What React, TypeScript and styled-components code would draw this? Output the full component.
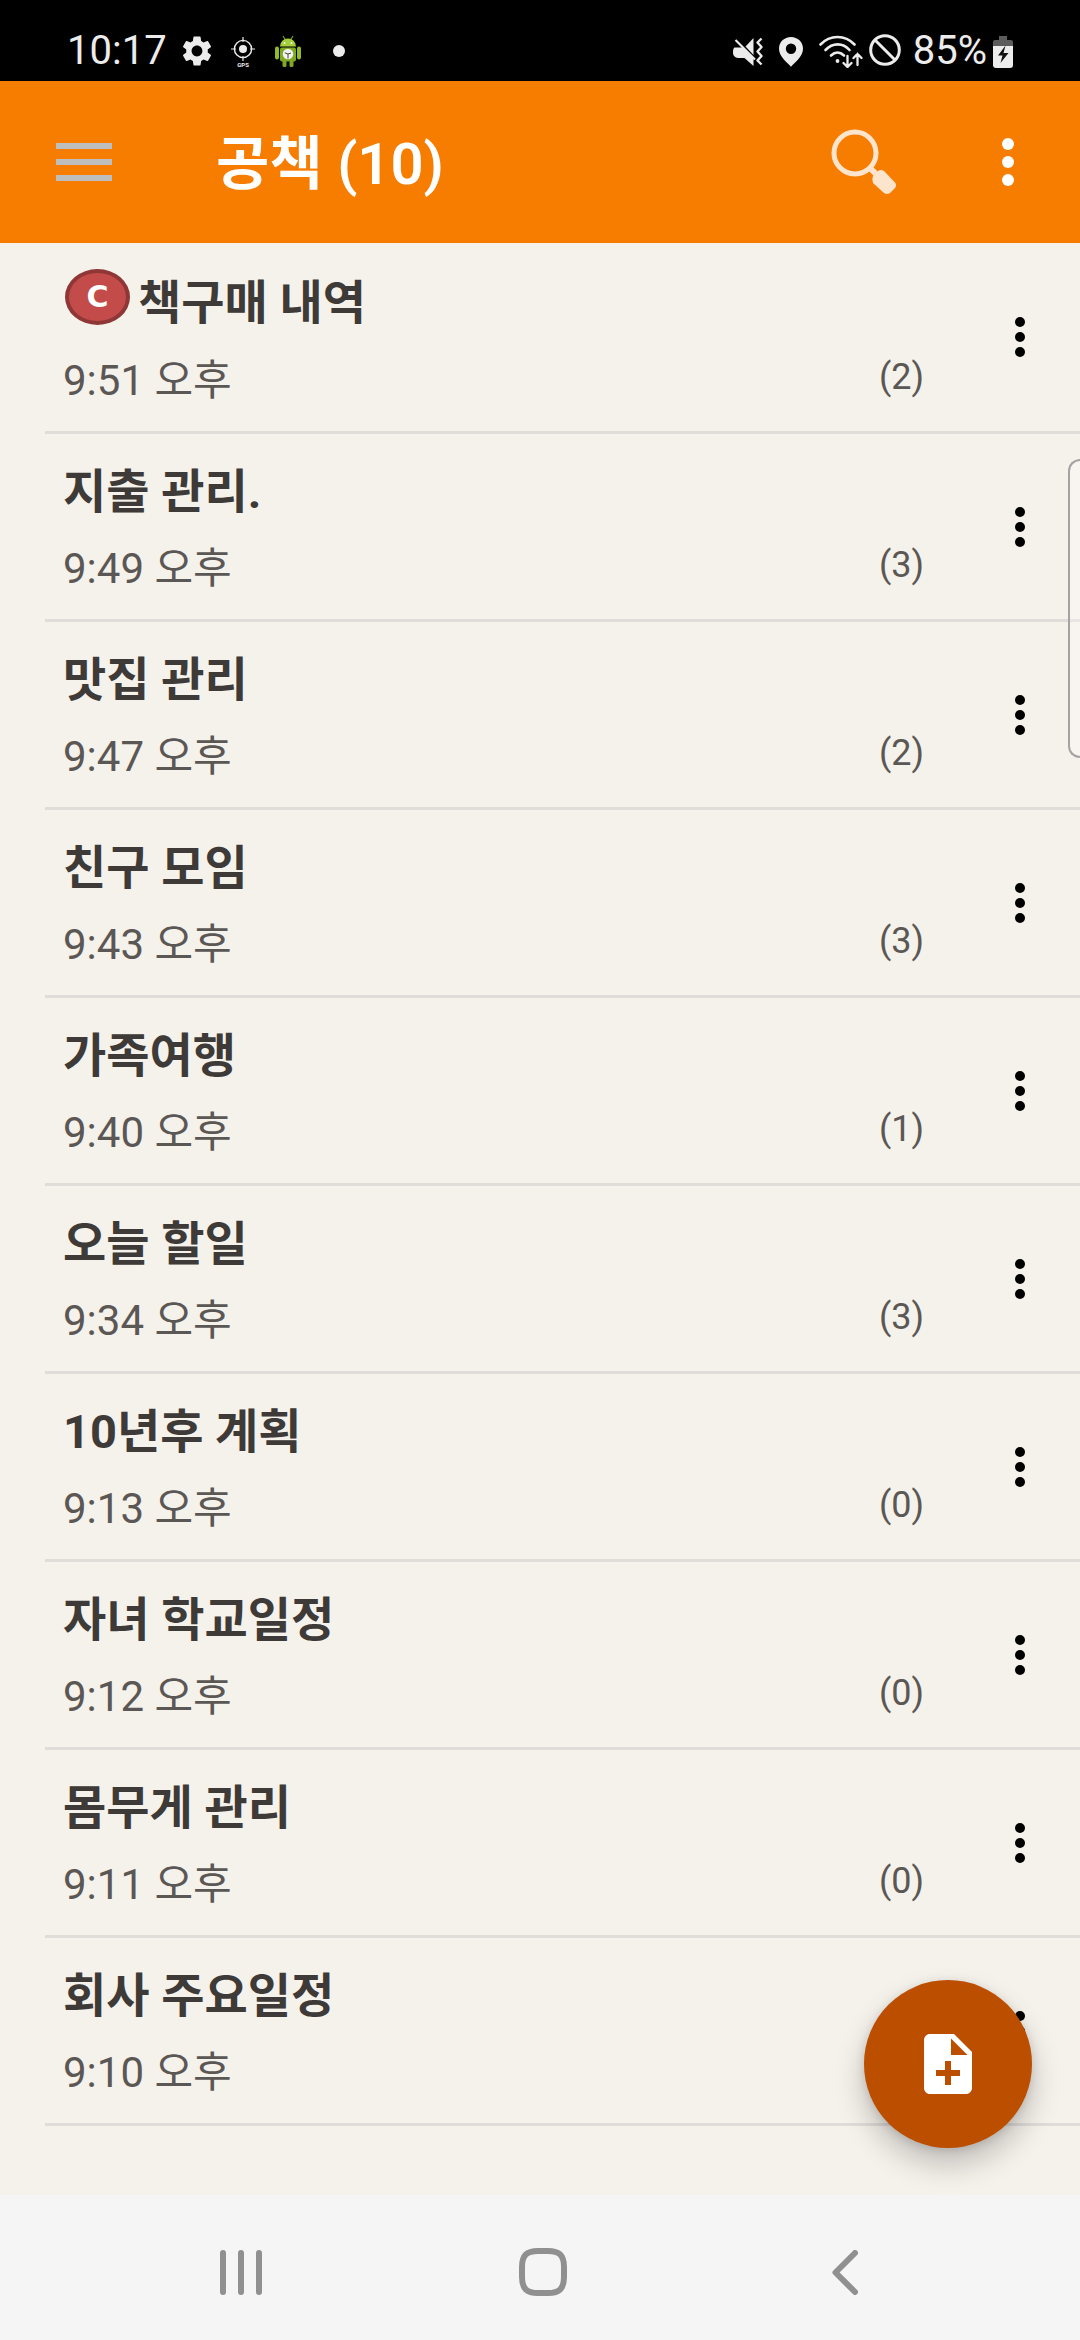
import React from "react";
import styled, { createGlobalStyle } from "styled-components";
import { MdNoteAdd, MdSettings } from "react-icons/md";

const GlobalStyle = createGlobalStyle`
  *, *::before, *::after { box-sizing: border-box; }
  body {
    margin: 0;
    background: #f5f1eb;
    font-family: Roboto, "Noto Sans CJK KR", sans-serif;
  }
  button {
    border: 0;
    padding: 0;
    background: none;
    font: inherit;
    cursor: pointer;
  }
  svg { display: block; flex: none; }
`;

const Screen = styled.div`
  position: relative;
  display: flex;
  flex-direction: column;
  min-height: 100vh;
`;

const StatusBar = styled.div`
  display: flex;
  justify-content: space-between;
  height: 81px;
  padding: 21px 67px 0 67px;
  background: #000;
  color: #ececec;
`;

const StatusGroup = styled.div<{ $gap: number }>`
  display: flex;
  align-items: center;
  gap: ${(p) => p.$gap}px;
  height: 60px;
`;

const StatusText = styled.span`
  font-size: 40px;
  line-height: 48px;
`;

const StatusDot = styled.span`
  width: 12px;
  height: 12px;
  margin-left: 12px;
  border-radius: 50%;
  background: currentColor;
`;

const AppBar = styled.header`
  display: flex;
  align-items: center;
  height: 162px;
  background: #f77d00;
  color: #fff;
`;

const BarButton = styled.button<{ $width: number }>`
  display: flex;
  align-items: center;
  justify-content: center;
  width: ${(p) => p.$width}px;
  height: 144px;
  color: inherit;
`;

const AppTitle = styled.h1`
  flex: 1;
  margin: 0;
  padding: 4px 0 0 48px;
  font-size: 58px;
  font-weight: 600;
  line-height: 72px;
`;

const NoteList = styled.ul`
  flex: 1;
  margin: 0;
  padding: 0 0 0 45px;
  list-style: none;
`;

const NoteRow = styled.li`
  display: flex;
  border-bottom: 3px solid #dfdcd9;
`;

const NoteBody = styled.div`
  flex: 1;
  padding: 26px 36px 26px 18px;
`;

const NoteTitle = styled.h2`
  display: flex;
  align-items: center;
  gap: 8px;
  margin: 0;
  color: #3d3a37;
  font-size: 47px;
  font-weight: 700;
  line-height: 64px;
`;

const NoteMeta = styled.div`
  display: flex;
  justify-content: space-between;
  padding-top: 21px;
  color: #5b5754;
`;

const NoteTime = styled.time`
  font-size: 42px;
  line-height: 48px;
`;

const NoteCount = styled.span`
  font-size: 36px;
  line-height: 40px;
`;

const RowMenu = styled.button`
  display: flex;
  align-items: center;
  justify-content: center;
  width: 120px;
  color: #000;
`;

const BadgeBox = styled.span`
  display: flex;
  align-items: center;
  justify-content: center;
  width: 65px;
  height: 56px;
  margin: 0 0 11px 2px;
  border: 4px solid #8f3737;
  border-radius: 50%;
  background: #c34c4b;
  color: #fff;
  font-family: "DejaVu Sans", sans-serif;
  font-size: 30px;
  font-weight: 700;
  line-height: 40px;
`;

const EdgeHandle = styled.div`
  position: absolute;
  top: 459px;
  right: 0;
  width: 12px;
  height: 299px;
  border: 2px solid #a5a3a1;
  border-right: 0;
  border-radius: 12px 0 0 12px;
  background: rgba(255, 255, 255, 0.3);
`;

const AddButton = styled.button`
  position: absolute;
  right: 48px;
  bottom: 192px;
  display: flex;
  align-items: center;
  justify-content: center;
  width: 168px;
  height: 168px;
  border-radius: 50%;
  background: #bc4e00;
  color: #fff;
  box-shadow: 0 16px 30px rgba(0, 0, 0, 0.22), 0 2px 10px rgba(0, 0, 0, 0.12);
`;

const NavBar = styled.nav`
  display: flex;
  justify-content: space-between;
  height: 145px;
  padding: 0 134px 0 140px;
  background: #f5f5f5;
  color: #909090;
`;

const NavButton = styled.button`
  display: flex;
  align-items: center;
  justify-content: center;
  width: 202px;
  height: 100%;
  padding-top: 9px;
  color: inherit;
`;

function MoreDots({ radius, pitch }: { radius: number; pitch: number }) {
  const width = radius * 2;
  const height = width + pitch * 2;
  return (
    <svg width={width} height={height} viewBox={`0 0 ${width} ${height}`} fill="currentColor" aria-hidden="true">
      {[0, 1, 2].map((i) => (
        <circle key={i} cx={radius} cy={radius + pitch * i} r={radius} />
      ))}
    </svg>
  );
}

function GpsIcon() {
  return (
    <svg width="24" height="34" viewBox="0 0 24 34" fill="none" stroke="currentColor" aria-label="GPS">
      <circle cx="12" cy="15" r="8.6" strokeWidth="1.4" />
      <circle cx="12" cy="15" r="4" fill="currentColor" stroke="none" />
      <path d="M12 3v5M12 22v5M0 15h5M19 15h5" strokeWidth="1.2" />
      <text x="12" y="33" textAnchor="middle" fontFamily="Roboto, sans-serif" fontSize="6" fontWeight="700" fill="currentColor" stroke="none">
        GPS
      </text>
    </svg>
  );
}

function RobotIcon() {
  return (
    <svg width="26" height="34" viewBox="0 0 26 34" aria-hidden="true">
      <path d="M8 2l2.500 4M18 2l-2.500 4" stroke="#7d9f1e" strokeWidth="1.200" />
      <path d="M5 12.500a8 8 0 0 1 16 0z" fill="#a5cf3a" />
      <rect x="5" y="13.500" width="16" height="14" rx="2" fill="#7fa823" />
      <rect x="0" y="12.500" width="4" height="13" rx="2" fill="#8fbb2c" />
      <rect x="22" y="12.500" width="4" height="13" rx="2" fill="#8fbb2c" />
      <rect x="7.500" y="26" width="4" height="7" rx="1.500" fill="#7fa823" />
      <rect x="14.500" y="26" width="4" height="7" rx="1.500" fill="#7fa823" />
      <circle cx="9.500" cy="9" r="0.900" fill="#fff" />
      <circle cx="16.500" cy="9" r="0.900" fill="#fff" />
      <circle cx="13" cy="20" r="5.300" fill="#f2f2ee" />
      <path d="M9.800 18.800l3.200 1.200 3-1M13 20v4.500" fill="none" stroke="#444" strokeWidth="1" />
    </svg>
  );
}

function MuteIcon() {
  return (
    <svg width="30" height="34" viewBox="0 0 30 34" fill="none" stroke="currentColor" aria-hidden="true">
      <path d="M20.500 4v17L12.500 12.500z" fill="currentColor" stroke="none" />
      <path d="M2 13.500h7.500L20.500 24.500v7.500L11.500 24H7C2 24 0 22 0 18.500c0-3 .500-5 2-5z" fill="currentColor" stroke="none" />
      <path d="M2.500 6L22 25.500" strokeWidth="2.200" />
      <path d="M28.500 4.500l-4 4 4 4.500-4 4.500 4 4.500-4 4.500 4 4" strokeWidth="2.400" strokeLinejoin="round" />
    </svg>
  );
}

function PinIcon() {
  return (
    <svg width="24" height="34" viewBox="0 0 24 34" fill="currentColor" aria-hidden="true">
      <path fillRule="evenodd" d="M12 3C5.300 3 0 8 0 14.800 0 22 6.500 27 12 32.700 17.500 27 24 22 24 14.800 24 8 18.700 3 12 3zm0 6.600a5.200 5.200 0 1 1 0 10.400 5.200 5.200 0 0 1 0-10.400z" />
    </svg>
  );
}

function WifiIcon() {
  return (
    <svg width="44" height="34" viewBox="0 0 44 34" fill="none" stroke="currentColor" strokeWidth="2.600" strokeLinecap="round" aria-hidden="true">
      <path d="M1.500 10.500C11 .500 26 .500 35.500 10.500" />
      <path d="M6.500 16c7-7.500 17.500-7.500 24 0" />
      <path d="M12 21.500c4-4 9-4 13 0" />
      <circle cx="18.500" cy="27" r="1.900" fill="currentColor" stroke="none" />
      <path d="M28.500 22v11M24.500 29l4 4 4-4M38.500 31V20M34.500 24l4-4 4 4" strokeWidth="2.300" />
    </svg>
  );
}

function BlockIcon() {
  return (
    <svg width="32" height="34" viewBox="0 0 32 34" fill="none" stroke="currentColor" strokeWidth="3" aria-hidden="true">
      <circle cx="16" cy="16" r="14.300" />
      <path d="M6 6l20 20" />
    </svg>
  );
}

function BatteryIcon() {
  return (
    <svg width="20" height="34" viewBox="0 0 20 34" aria-hidden="true">
      <path d="M6 2h8v4h4a2 2 0 0 1 2 2v5H0V8a2 2 0 0 1 2-2h4z" fill="#5c5c5c" />
      <path d="M0 12h20v19a3 3 0 0 1-3 3H3a3 3 0 0 1-3-3z" fill="currentColor" />
      <path d="M12.500 11.500L5 21.500h4.500L7.500 29 15.500 19h-5z" fill="#111" />
    </svg>
  );
}

function MenuIcon() {
  return (
    <svg width="56" height="38" viewBox="0 0 56 38" fill="#bebebe" aria-hidden="true">
      <path d="M0 0h56v6H0zM0 16h56v6H0zM0 32h56v6H0z" />
    </svg>
  );
}

function SearchIcon() {
  return (
    <svg width="68" height="68" viewBox="0 0 68 68" fill="none" stroke="#fde5cd" aria-hidden="true">
      <circle cx="25" cy="25" r="21" strokeWidth="5" />
      <path d="M39 39l8 8" strokeWidth="6" />
      <path d="M43 48l5-5q3-2 6 0l11 11.500q2 3 0 5.500l-5 5q-3 2-6 0L43 55q-1.500-4 0-7z" fill="#fde5cd" stroke="none" />
    </svg>
  );
}

function RecentsIcon() {
  return (
    <svg width="42" height="45" viewBox="0 0 42 45" stroke="currentColor" strokeWidth="6" strokeLinecap="round" aria-hidden="true">
      <path d="M3 3v39M21 3v39M39 3v39" />
    </svg>
  );
}

function HomeIcon() {
  return (
    <svg width="48" height="48" viewBox="0 0 48 48" fill="none" stroke="currentColor" strokeWidth="6" aria-hidden="true">
      <path d="M19 3h10c11.500 0 16 4.500 16 16v10c0 11.500-4.500 16-16 16H19C7.500 45 3 40.500 3 29V19C3 7.500 7.500 3 19 3z" />
    </svg>
  );
}

function BackIcon() {
  return (
    <svg width="26" height="45" viewBox="0 0 26 45" fill="none" stroke="currentColor" strokeWidth="6" strokeLinecap="round" strokeLinejoin="round" aria-hidden="true">
      <path d="M23 3L3.500 22.500 23 42" />
    </svg>
  );
}

interface Note {
  title: string;
  time: string;
  count?: number;
  badge?: string;
}

const notes: Note[] = [
  { title: "책구매 내역", time: "9:51 오후", count: 2, badge: "C" },
  { title: "지출 관리.", time: "9:49 오후", count: 3 },
  { title: "맛집 관리", time: "9:47 오후", count: 2 },
  { title: "친구 모임", time: "9:43 오후", count: 3 },
  { title: "가족여행", time: "9:40 오후", count: 1 },
  { title: "오늘 할일", time: "9:34 오후", count: 3 },
  { title: "10년후 계획", time: "9:13 오후", count: 0 },
  { title: "자녀 학교일정", time: "9:12 오후", count: 0 },
  { title: "몸무게 관리", time: "9:11 오후", count: 0 },
  { title: "회사 주요일정", time: "9:10 오후" },
];

export default function App() {
  return (
    <>
      <GlobalStyle />
      <Screen>
        <StatusBar>
          <StatusGroup $gap={20}>
            <StatusGroup $gap={12}>
              <StatusText>10:17</StatusText>
              <StatusGroup $gap={16}>
                <MdSettings size={36} />
                <GpsIcon />
              </StatusGroup>
            </StatusGroup>
            <RobotIcon />
            <StatusDot />
          </StatusGroup>
          <StatusGroup $gap={12}>
            <StatusGroup $gap={6}>
              <StatusGroup $gap={16}>
                <MuteIcon />
                <PinIcon />
                <WifiIcon />
              </StatusGroup>
              <BlockIcon />
            </StatusGroup>
            <StatusGroup $gap={6}>
              <StatusText>85%</StatusText>
              <BatteryIcon />
            </StatusGroup>
          </StatusGroup>
        </StatusBar>
        <AppBar>
          <BarButton $width={168} aria-label="Menu">
            <MenuIcon />
          </BarButton>
          <AppTitle>공책 (10)</AppTitle>
          <BarButton $width={144} aria-label="Search">
            <SearchIcon />
          </BarButton>
          <BarButton $width={144} aria-label="More">
            <MoreDots radius={6} pitch={18} />
          </BarButton>
        </AppBar>
        <NoteList>
          {notes.map((note) => (
            <NoteRow key={note.title}>
              <NoteBody>
                <NoteTitle>
                  {note.badge && <BadgeBox>{note.badge}</BadgeBox>}
                  {note.title}
                </NoteTitle>
                <NoteMeta>
                  <NoteTime>{note.time}</NoteTime>
                  {note.count !== undefined && <NoteCount>({note.count})</NoteCount>}
                </NoteMeta>
              </NoteBody>
              <RowMenu aria-label="More">
                <MoreDots radius={5} pitch={15} />
              </RowMenu>
            </NoteRow>
          ))}
        </NoteList>
        <NavBar>
          <NavButton aria-label="Recents">
            <RecentsIcon />
          </NavButton>
          <NavButton aria-label="Home">
            <HomeIcon />
          </NavButton>
          <NavButton aria-label="Back">
            <BackIcon />
          </NavButton>
        </NavBar>
        <EdgeHandle />
        <AddButton aria-label="Add note">
          <MdNoteAdd size={72} />
        </AddButton>
      </Screen>
    </>
  );
}
